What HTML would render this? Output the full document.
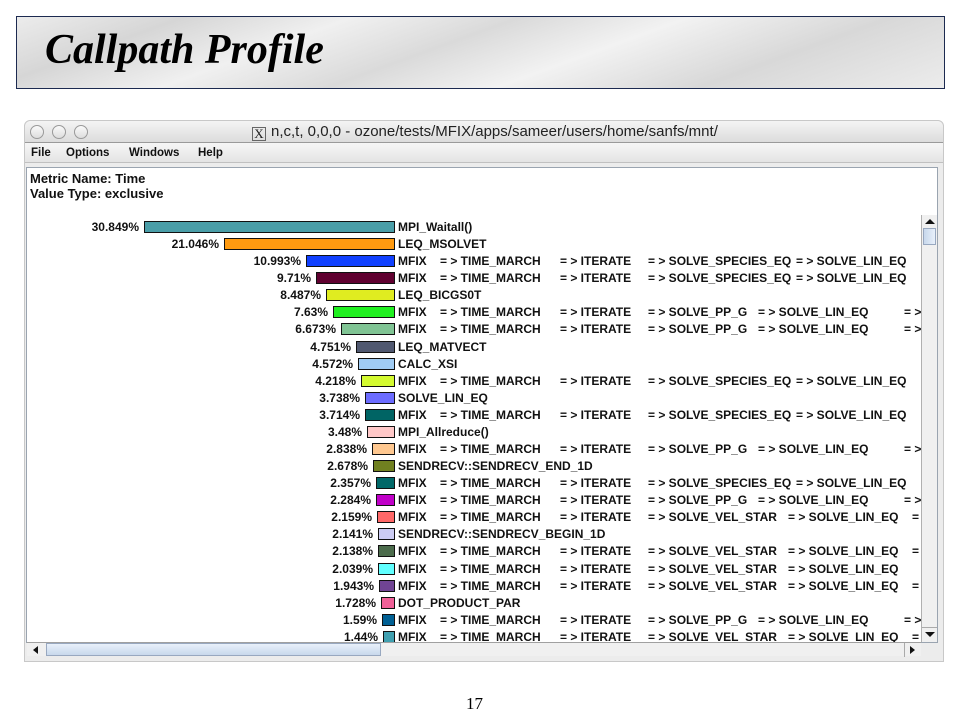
<!DOCTYPE html>
<html><head><meta charset="utf-8"><style>
*{margin:0;padding:0;box-sizing:border-box}
body{width:960px;height:720px;background:#fff;position:relative;overflow:hidden;font-family:"Liberation Sans",sans-serif}
.banner{position:absolute;left:16px;top:16px;width:929px;height:73px;border:1px solid #1c2a50;
background:linear-gradient(160deg,#ececec 0%,#d6d6d6 15%,#f0f0f0 30%,#dadada 45%,#f2f2f2 60%,#d8d8d8 78%,#ececec 100%)}
.banner span{position:absolute;left:28px;top:9px;font:italic bold 42px "Liberation Serif",serif;color:#000}
.win{position:absolute;left:24px;top:120px;width:920px;height:542px;background:#ececec;border-radius:6px 6px 0 0;border:1px solid #c8c8c8}
.tb{position:absolute;left:0;top:0;width:100%;height:22px;background:linear-gradient(#f4f4f4,#dcdcdc);border-bottom:1px solid #9a9a9a;border-radius:6px 6px 0 0}
.dot{position:absolute;top:4px;width:14px;height:14px;border-radius:50%;border:1px solid #999;background:linear-gradient(#fafafa,#ddd)}
.ttl{position:absolute;left:227px;top:2px;font-size:15px;color:#222;white-space:nowrap}
.xi{display:inline-block;width:14px;height:14px;border:1px solid #666;font:13px "Liberation Serif",serif;line-height:12px;text-align:center;margin-right:5px;vertical-align:-2px}
.menu{position:absolute;left:0;top:22px;width:100%;height:20px;background:linear-gradient(#f6f6f6,#e4e4e4);border-bottom:1px solid #c0c0c0;font:bold 11.5px "Liberation Sans",sans-serif;color:#111}
.menu span{position:absolute;top:4px}
.content{position:absolute;left:26px;top:167px;width:912px;height:476px;background:#fff;border:1px solid #9aa4b0}
.clip{position:absolute;left:26px;top:170px;width:895px;height:472px;overflow:hidden;font:bold 12px "Liberation Sans",sans-serif;color:#111}
.hdr{position:absolute;left:4px;font:bold 13px "Liberation Sans",sans-serif}
.r{position:absolute;left:0;width:369px;height:12px;display:flex;justify-content:flex-end;align-items:center;gap:5px;line-height:12px}
.b{display:inline-block;height:12px;border:1px solid #111;flex:none}
.l{position:absolute;height:12px;line-height:12px;white-space:nowrap}
.vs{position:absolute;left:921px;top:215px;width:16px;height:427px;background:#f0f0f0;border-left:1px solid #b0b0b0}
.hs{position:absolute;left:27px;top:642px;width:894px;height:14px;background:#f0f0f0;border-top:1px solid #a0a0a0}
</style></head><body>
<div class="banner"><span>Callpath Profile</span></div>
<div class="win">
<div class="tb">
<div class="dot" style="left:5px"></div><div class="dot" style="left:27px"></div><div class="dot" style="left:49px"></div>
<div class="ttl"><span class="xi">X</span>n,c,t, 0,0,0 - ozone/tests/MFIX/apps/sameer/users/home/sanfs/mnt/</div>
</div>
<div class="menu"><span style="left:6px">File</span><span style="left:41px">Options</span><span style="left:104px">Windows</span><span style="left:173px">Help</span></div>
</div>
<div class="content"></div>
<div class="clip">
<div class="hdr" style="top:1px">Metric Name: Time</div>
<div class="hdr" style="top:16px">Value Type: exclusive</div>

<div class="r" style="top:51px">30.849%<i class="b" style="width:251px;background:#4a9ea8"></i></div><div class="l" style="top:51px;left:372px">MPI_Waitall()</div>
<div class="r" style="top:68px">21.046%<i class="b" style="width:171px;background:#ff9a10"></i></div><div class="l" style="top:68px;left:372px">LEQ_MSOLVET</div>
<div class="r" style="top:85px">10.993%<i class="b" style="width:89px;background:#1040ff"></i></div><div class="l" style="top:85px;left:372px">MFIX</div><div class="l" style="top:85px;left:414px">= &gt; TIME_MARCH</div><div class="l" style="top:85px;left:534px">= &gt; ITERATE</div><div class="l" style="top:85px;left:622px">= &gt; SOLVE_SPECIES_EQ</div><div class="l" style="top:85px;left:770px">= &gt; SOLVE_LIN_EQ</div>
<div class="r" style="top:102px">9.71%<i class="b" style="width:79px;background:#600030"></i></div><div class="l" style="top:102px;left:372px">MFIX</div><div class="l" style="top:102px;left:414px">= &gt; TIME_MARCH</div><div class="l" style="top:102px;left:534px">= &gt; ITERATE</div><div class="l" style="top:102px;left:622px">= &gt; SOLVE_SPECIES_EQ</div><div class="l" style="top:102px;left:770px">= &gt; SOLVE_LIN_EQ</div>
<div class="r" style="top:119px">8.487%<i class="b" style="width:69px;background:#e0ec20"></i></div><div class="l" style="top:119px;left:372px">LEQ_BICGS0T</div>
<div class="r" style="top:136px">7.63%<i class="b" style="width:62px;background:#20f020"></i></div><div class="l" style="top:136px;left:372px">MFIX</div><div class="l" style="top:136px;left:414px">= &gt; TIME_MARCH</div><div class="l" style="top:136px;left:534px">= &gt; ITERATE</div><div class="l" style="top:136px;left:622px">= &gt; SOLVE_PP_G</div><div class="l" style="top:136px;left:732px">= &gt; SOLVE_LIN_EQ</div><div class="l" style="top:136px;left:878px">= &gt; LEQ</div>
<div class="r" style="top:153px">6.673%<i class="b" style="width:54px;background:#80c494"></i></div><div class="l" style="top:153px;left:372px">MFIX</div><div class="l" style="top:153px;left:414px">= &gt; TIME_MARCH</div><div class="l" style="top:153px;left:534px">= &gt; ITERATE</div><div class="l" style="top:153px;left:622px">= &gt; SOLVE_PP_G</div><div class="l" style="top:153px;left:732px">= &gt; SOLVE_LIN_EQ</div><div class="l" style="top:153px;left:878px">= &gt; LEQ</div>
<div class="r" style="top:171px">4.751%<i class="b" style="width:39px;background:#505870"></i></div><div class="l" style="top:171px;left:372px">LEQ_MATVECT</div>
<div class="r" style="top:188px">4.572%<i class="b" style="width:37px;background:#a0ccf4"></i></div><div class="l" style="top:188px;left:372px">CALC_XSI</div>
<div class="r" style="top:205px">4.218%<i class="b" style="width:34px;background:#d4fa30"></i></div><div class="l" style="top:205px;left:372px">MFIX</div><div class="l" style="top:205px;left:414px">= &gt; TIME_MARCH</div><div class="l" style="top:205px;left:534px">= &gt; ITERATE</div><div class="l" style="top:205px;left:622px">= &gt; SOLVE_SPECIES_EQ</div><div class="l" style="top:205px;left:770px">= &gt; SOLVE_LIN_EQ</div>
<div class="r" style="top:222px">3.738%<i class="b" style="width:30px;background:#6c6cff"></i></div><div class="l" style="top:222px;left:372px">SOLVE_LIN_EQ</div>
<div class="r" style="top:239px">3.714%<i class="b" style="width:30px;background:#006464"></i></div><div class="l" style="top:239px;left:372px">MFIX</div><div class="l" style="top:239px;left:414px">= &gt; TIME_MARCH</div><div class="l" style="top:239px;left:534px">= &gt; ITERATE</div><div class="l" style="top:239px;left:622px">= &gt; SOLVE_SPECIES_EQ</div><div class="l" style="top:239px;left:770px">= &gt; SOLVE_LIN_EQ</div>
<div class="r" style="top:256px">3.48%<i class="b" style="width:28px;background:#ffc8c8"></i></div><div class="l" style="top:256px;left:372px">MPI_Allreduce()</div>
<div class="r" style="top:273px">2.838%<i class="b" style="width:23px;background:#ffc890"></i></div><div class="l" style="top:273px;left:372px">MFIX</div><div class="l" style="top:273px;left:414px">= &gt; TIME_MARCH</div><div class="l" style="top:273px;left:534px">= &gt; ITERATE</div><div class="l" style="top:273px;left:622px">= &gt; SOLVE_PP_G</div><div class="l" style="top:273px;left:732px">= &gt; SOLVE_LIN_EQ</div><div class="l" style="top:273px;left:878px">= &gt; LEQ</div>
<div class="r" style="top:290px">2.678%<i class="b" style="width:22px;background:#708020"></i></div><div class="l" style="top:290px;left:372px">SENDRECV::SENDRECV_END_1D</div>
<div class="r" style="top:307px">2.357%<i class="b" style="width:19px;background:#006868"></i></div><div class="l" style="top:307px;left:372px">MFIX</div><div class="l" style="top:307px;left:414px">= &gt; TIME_MARCH</div><div class="l" style="top:307px;left:534px">= &gt; ITERATE</div><div class="l" style="top:307px;left:622px">= &gt; SOLVE_SPECIES_EQ</div><div class="l" style="top:307px;left:770px">= &gt; SOLVE_LIN_EQ</div>
<div class="r" style="top:324px">2.284%<i class="b" style="width:19px;background:#c000c8"></i></div><div class="l" style="top:324px;left:372px">MFIX</div><div class="l" style="top:324px;left:414px">= &gt; TIME_MARCH</div><div class="l" style="top:324px;left:534px">= &gt; ITERATE</div><div class="l" style="top:324px;left:622px">= &gt; SOLVE_PP_G</div><div class="l" style="top:324px;left:732px">= &gt; SOLVE_LIN_EQ</div><div class="l" style="top:324px;left:878px">= &gt; LEQ</div>
<div class="r" style="top:341px">2.159%<i class="b" style="width:18px;background:#ff6868"></i></div><div class="l" style="top:341px;left:372px">MFIX</div><div class="l" style="top:341px;left:414px">= &gt; TIME_MARCH</div><div class="l" style="top:341px;left:534px">= &gt; ITERATE</div><div class="l" style="top:341px;left:622px">= &gt; SOLVE_VEL_STAR</div><div class="l" style="top:341px;left:762px">= &gt; SOLVE_LIN_EQ</div><div class="l" style="top:341px;left:886px">= &gt;</div>
<div class="r" style="top:358px">2.141%<i class="b" style="width:17px;background:#ccccf4"></i></div><div class="l" style="top:358px;left:372px">SENDRECV::SENDRECV_BEGIN_1D</div>
<div class="r" style="top:375px">2.138%<i class="b" style="width:17px;background:#4c6c4c"></i></div><div class="l" style="top:375px;left:372px">MFIX</div><div class="l" style="top:375px;left:414px">= &gt; TIME_MARCH</div><div class="l" style="top:375px;left:534px">= &gt; ITERATE</div><div class="l" style="top:375px;left:622px">= &gt; SOLVE_VEL_STAR</div><div class="l" style="top:375px;left:762px">= &gt; SOLVE_LIN_EQ</div><div class="l" style="top:375px;left:886px">= &gt;</div>
<div class="r" style="top:393px">2.039%<i class="b" style="width:17px;background:#60ffff"></i></div><div class="l" style="top:393px;left:372px">MFIX</div><div class="l" style="top:393px;left:414px">= &gt; TIME_MARCH</div><div class="l" style="top:393px;left:534px">= &gt; ITERATE</div><div class="l" style="top:393px;left:622px">= &gt; SOLVE_VEL_STAR</div><div class="l" style="top:393px;left:762px">= &gt; SOLVE_LIN_EQ</div>
<div class="r" style="top:410px">1.943%<i class="b" style="width:16px;background:#704494"></i></div><div class="l" style="top:410px;left:372px">MFIX</div><div class="l" style="top:410px;left:414px">= &gt; TIME_MARCH</div><div class="l" style="top:410px;left:534px">= &gt; ITERATE</div><div class="l" style="top:410px;left:622px">= &gt; SOLVE_VEL_STAR</div><div class="l" style="top:410px;left:762px">= &gt; SOLVE_LIN_EQ</div><div class="l" style="top:410px;left:886px">= &gt;</div>
<div class="r" style="top:427px">1.728%<i class="b" style="width:14px;background:#f06098"></i></div><div class="l" style="top:427px;left:372px">DOT_PRODUCT_PAR</div>
<div class="r" style="top:444px">1.59%<i class="b" style="width:13px;background:#006094"></i></div><div class="l" style="top:444px;left:372px">MFIX</div><div class="l" style="top:444px;left:414px">= &gt; TIME_MARCH</div><div class="l" style="top:444px;left:534px">= &gt; ITERATE</div><div class="l" style="top:444px;left:622px">= &gt; SOLVE_PP_G</div><div class="l" style="top:444px;left:732px">= &gt; SOLVE_LIN_EQ</div><div class="l" style="top:444px;left:878px">= &gt; LEQ</div>
<div class="r" style="top:461px">1.44%<i class="b" style="width:12px;background:#40a0b0"></i></div><div class="l" style="top:461px;left:372px">MFIX</div><div class="l" style="top:461px;left:414px">= &gt; TIME_MARCH</div><div class="l" style="top:461px;left:534px">= &gt; ITERATE</div><div class="l" style="top:461px;left:622px">= &gt; SOLVE_VEL_STAR</div><div class="l" style="top:461px;left:762px">= &gt; SOLVE_LIN_EQ</div><div class="l" style="top:461px;left:886px">= &gt;</div>
</div>
<div class="vs">
<div style="position:absolute;left:3px;top:4px;width:0;height:0;border-left:5px solid transparent;border-right:5px solid transparent;border-bottom:5px solid #111"></div>
<div style="position:absolute;left:1px;top:13px;width:13px;height:17px;background:linear-gradient(90deg,#c8d8ec,#e8f0fa);border:1px solid #98a8c0"></div>
<div style="position:absolute;left:0;top:412px;width:15px;height:14px;border-top:1px solid #aaa"></div>
<div style="position:absolute;left:3px;top:417px;width:0;height:0;border-left:5px solid transparent;border-right:5px solid transparent;border-top:5px solid #111"></div>
</div>
<div class="hs">
<div style="position:absolute;left:6px;top:3px;width:0;height:0;border-top:4px solid transparent;border-bottom:4px solid transparent;border-right:5px solid #111"></div>
<div style="position:absolute;left:19px;top:0;width:335px;height:13px;background:linear-gradient(#e8f0fa,#c8d8ec);border:1px solid #98a8c0"></div>
<div style="position:absolute;left:877px;top:0;width:1px;height:14px;background:#aaa"></div>
<div style="position:absolute;left:883px;top:3px;width:0;height:0;border-top:4px solid transparent;border-bottom:4px solid transparent;border-left:5px solid #111"></div>
</div>
<div style="position:absolute;left:466px;top:694px;font:17px 'Liberation Serif',serif;color:#000">17</div>
</body></html>
